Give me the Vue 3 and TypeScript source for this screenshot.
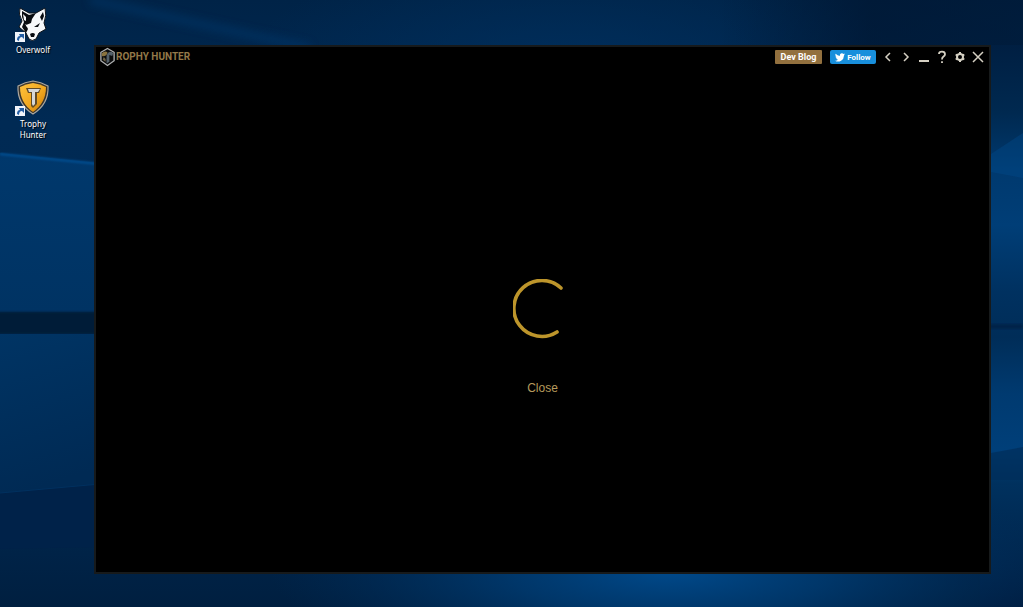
<script setup lang="ts">
interface Shortcut {
  id: 'overwolf' | 'trophy'
  label: string
}

const shortcuts: Shortcut[] = [
  { id: 'overwolf', label: 'Overwolf' },
  { id: 'trophy', label: 'Trophy Hunter' },
]
</script>

<template>
  <div class="desktop">
    <svg class="wallpaper" viewBox="0 0 1023 607" preserveAspectRatio="none" aria-hidden="true">
      <defs>
        <linearGradient id="base" x1="0" y1="0" x2="0" y2="1">
          <stop offset="0" stop-color="#002347" />
          <stop offset="0.2" stop-color="#002a54" />
          <stop offset="0.8" stop-color="#002850" />
          <stop offset="1" stop-color="#001f40" />
        </linearGradient>
        <radialGradient id="top-glow">
          <stop offset="0" stop-color="#00305f" stop-opacity="0.8" />
          <stop offset="1" stop-color="#00305f" stop-opacity="0" />
        </radialGradient>
        <radialGradient id="bottom-glow">
          <stop offset="0" stop-color="#004a8c" />
          <stop offset="0.4" stop-color="#003c73" stop-opacity="0.8" />
          <stop offset="1" stop-color="#00305f" stop-opacity="0" />
        </radialGradient>
        <linearGradient id="corner" x1="0" y1="0" x2="1" y2="0">
          <stop offset="0" stop-color="#00142e" stop-opacity="0" />
          <stop offset="0.5" stop-color="#00142e" stop-opacity="0.6" />
          <stop offset="1" stop-color="#00142e" stop-opacity="0.5" />
        </linearGradient>
        <linearGradient id="pane-upper" x1="0" y1="0" x2="0" y2="1">
          <stop offset="0" stop-color="#00386c" />
          <stop offset="1" stop-color="#003363" />
        </linearGradient>
        <linearGradient id="pane-lower" x1="0" y1="0" x2="0.2" y2="1">
          <stop offset="0" stop-color="#003464" />
          <stop offset="1" stop-color="#002a54" />
        </linearGradient>
        <linearGradient id="right-side" x1="0" y1="0" x2="0" y2="1">
          <stop offset="0" stop-color="#001f42" />
          <stop offset="0.12" stop-color="#002950" />
          <stop offset="0.22" stop-color="#00396e" />
          <stop offset="0.32" stop-color="#003e77" />
          <stop offset="0.44" stop-color="#003160" />
          <stop offset="0.52" stop-color="#002d58" />
          <stop offset="0.62" stop-color="#003a70" />
          <stop offset="0.72" stop-color="#003f79" />
          <stop offset="0.78" stop-color="#00315e" />
          <stop offset="1" stop-color="#001e42" />
        </linearGradient>
        <filter id="soft" x="-20%" y="-20%" width="140%" height="140%">
          <feGaussianBlur stdDeviation="1" />
        </filter>
        <filter id="haze" x="-20%" y="-50%" width="140%" height="200%">
          <feGaussianBlur stdDeviation="4" />
        </filter>
      </defs>
      <rect width="1023" height="607" fill="url(#base)" />
      <ellipse cx="570" cy="70" rx="330" ry="120" fill="url(#top-glow)" />
      <rect x="720" width="303" height="50" fill="url(#corner)" />
      <path d="M90 0 L310 48" stroke="#003a70" stroke-width="8" opacity="0.5" filter="url(#haze)" />
      <path d="M0 153 L100 163 V312 H0Z" fill="url(#pane-upper)" />
      <path d="M0 154 L100 164" stroke="#005195" stroke-width="2" filter="url(#soft)" />
      <path d="M-4 312 H104 V334 H-4Z" fill="#001a39" filter="url(#soft)" />
      <path d="M0 334 H100 V484 L0 493Z" fill="url(#pane-lower)" />
      <path d="M0 493 L100 484 V547 L0 549Z" fill="#002249" />
      <path d="M0 493 L100 484" stroke="#00315f" />
      <rect x="980" y="45" width="43" height="562" fill="url(#right-side)" />
      <path d="M991 154 L1023 133 V178 L991 172Z" fill="#004a8b" opacity="0.4" />
      <path d="M980 324 H1023 V329 H980Z" fill="#00234a" filter="url(#soft)" />
      <path d="M991 453 L1023 447 V480 H991Z" fill="#002d5a" opacity="0.7" />
      <ellipse cx="670" cy="570" rx="400" ry="110" fill="url(#bottom-glow)" />
    </svg>

    <nav class="shortcuts" aria-label="Desktop shortcuts">
      <button v-for="item in shortcuts" :key="item.id" class="shortcut" type="button">
        <svg v-if="item.id === 'overwolf'" class="shortcut-icon" viewBox="0 0 36 36" aria-hidden="true">
          <path d="M5 2 L14 7 L21 7 L30 2 Q32 9 29 17 L31 23 L24 27 L21 33 Q17 36 14 33 L11 27 L4 21 L7 15 Q3 8 5 2Z" fill="#f7f8fa" stroke="#0b1118" />
          <path d="M7 5 L14 9 L21 7 L17 13 L16 17 L11 19 L13 23 L11 27 L7 21 L9 16 L7 11Z" fill="#080b10" />
          <path d="M8 8 L11 11 L11 15 L9 14Z" fill="#f7f8fa" />
          <path d="M28 6 L29 10 L27 15 L25 11Z" fill="#080b10" />
          <path d="M19 21 L25 17 L23 21Z M15 28 Q18 26 20 28 L19 31 L16 31Z" fill="#080b10" />
          <path d="M10 18 L15 21 L12 21Z" fill="#f7f8fa" />
          <rect x="0" y="26" width="10" height="10" fill="#f0f4fa" />
          <path d="M2 34 Q2 30 5 30 L4 28 H9 V33 L7 31 Q4 31 4 35Z" fill="#225da4" />
        </svg>
        <svg v-else class="shortcut-icon" viewBox="0 0 36 36" aria-hidden="true">
          <defs>
            <linearGradient id="gold" x1="0" y1="0" x2="1" y2="1">
              <stop offset="0" stop-color="#ffc33e" />
              <stop offset="0.55" stop-color="#f1a71f" />
              <stop offset="1" stop-color="#c87908" />
            </linearGradient>
          </defs>
          <path d="M18 1 Q26 2 33 6 Q34 24 18 34 Q2 24 3 6 Q10 2 18 1Z" fill="#3b3429" stroke="#aaa69e" stroke-width="1.2" />
          <path d="M18 3 Q25 4 31 7 Q31 23 18 32 Q5 23 5 7 Q11 4 18 3Z" fill="url(#gold)" />
          <path d="M11 8 H26 L24 13 L22 13 V24 L18 28 L16 26 V13 L13 13Z" fill="#604b29" />
          <path d="M13 9 H25 L23 12 L20 12 V24 L18 26 L17 24 V12 L14 12Z" fill="#d6d7d8" />
          <rect x="0" y="26" width="10" height="10" fill="#f0f4fa" />
          <path d="M2 34 Q2 30 5 30 L4 28 H9 V33 L7 31 Q4 31 4 35Z" fill="#225da4" />
        </svg>
        <span class="shortcut-label">{{ item.label }}</span>
      </button>
    </nav>

    <section class="window" aria-label="Trophy Hunter">
      <header class="titlebar">
        <div class="brand">
          <svg class="brand-mark" viewBox="0 0 18 20" aria-hidden="true">
            <path d="M9 1 L16 5 V14 L9 19 L2 14 V5Z" fill="#0b0c0d" stroke="#aeb0b1" stroke-width="1.4" />
            <path d="M3 6 Q6 3 9 5 L8 8 Q5 10 3 9Z" fill="#8a733f" />
            <path d="M9 6 Q13 3 15 6 L14 9 L11 8 L11 15 L8 17 V9Z" fill="#53606a" />
            <path d="M5 10 L7 12 V15 L4 13Z" fill="#6f6345" />
          </svg>
          <span>ROPHY HUNTER</span>
        </div>
        <div class="actions">
          <button class="badge blog" type="button">Dev Blog</button>
          <button class="badge follow" type="button">
            <svg class="bird" viewBox="0 0 24 20" aria-hidden="true">
              <path d="M24 2.4a10 10 0 0 1-2.8.8A5 5 0 0 0 23.300.5a10 10 0 0 1-3.100 1.200 4.900 4.900 0 0 0-8.400 4.500A14 14 0 0 1 1.700 1a4.900 4.900 0 0 0 1.500 6.600A5 5 0 0 1 1 7a5 5 0 0 0 3.900 4.900 5 5 0 0 1-2.200.1 4.900 4.900 0 0 0 4.600 3.400A10 10 0 0 1 0 17.500 14 14 0 0 0 21.500 4.900 10 10 0 0 0 24 2.400Z" fill="#fff" />
            </svg>
            <span>Follow</span>
          </button>
          <div class="controls">
            <button class="control" type="button" aria-label="Back">
              <svg viewBox="0 0 14 14"><path d="M9 3 L5 7 L9 11" /></svg>
            </button>
            <button class="control" type="button" aria-label="Forward">
              <svg viewBox="0 0 14 14"><path d="M5 3 L9 7 L5 11" /></svg>
            </button>
            <button class="control" type="button" aria-label="Minimize">
              <svg viewBox="0 0 14 14"><path d="M2 11 H12" stroke-width="2" /></svg>
            </button>
            <button class="control" type="button" aria-label="Help">
              <svg viewBox="0 0 14 14"><path d="M4 4 Q4 1.700 7 1.700 Q10 1.700 10 4.200 Q10 5.500 8.500 6.500 Q7 7.500 7 9.500 M7 11.200 V13" stroke-width="1.800" /></svg>
            </button>
            <button class="control" type="button" aria-label="Settings">
              <svg viewBox="0 0 14 14">
                <circle cx="7" cy="7" r="3" stroke-width="2" />
                <path d="M7 2 V4 M7 10 V12 M2.700 4.500 L4.400 5.500 M9.600 8.500 L11.300 9.500 M2.700 9.500 L4.400 8.500 M9.600 5.500 L11.300 4.500" stroke-width="2" />
              </svg>
            </button>
            <button class="control" type="button" aria-label="Close window">
              <svg viewBox="0 0 14 14"><path d="M2 2 L12 12 M12 2 L2 12" /></svg>
            </button>
          </div>
        </div>
      </header>

      <main class="loading">
        <svg class="spinner" viewBox="0 0 60 60" role="img" aria-label="Loading">
          <path d="M48 9 A28 28 0 1 0 44 53" fill="none" stroke="#bd952b" stroke-width="3.600" stroke-linecap="round" />
        </svg>
        <button class="close" type="button">Close</button>
      </main>
    </section>
  </div>
</template>

<style>
body {
  margin: 0;
  background: #002850;
}
</style>

<style scoped>
.desktop {
  position: relative;
  display: grid;
  grid-template-columns: 94px minmax(0, 1fr);
  min-height: 100vh;
  box-sizing: border-box;
  padding-right: 32px;
  font-family: "Liberation Sans", Arial, sans-serif;
}

.wallpaper {
  position: absolute;
  inset: 0;
  width: 100%;
  height: 100%;
}

button {
  border: 0;
  padding: 0;
  background: none;
  color: inherit;
  font: inherit;
  cursor: pointer;
}

.shortcuts {
  position: relative;
  display: flex;
  flex-direction: column;
  gap: 25px;
  padding: 6px 0 0 8px;
}

.shortcut {
  display: flex;
  flex-direction: column;
  align-items: center;
  gap: 2px;
  width: 50px;
  color: #fff;
  font-family: "Noto Sans", "Open Sans", sans-serif;
  font-size: 8px;
  line-height: 11px;
  text-shadow: 1px 1px 1px #000;
}

.shortcut-icon {
  width: 36px;
  height: 36px;
}

.shortcut-label {
  max-width: 40px;
}

.window {
  position: relative;
  display: flex;
  flex-direction: column;
  margin: 45px 0 33px;
  border: 2px solid #171a1b;
  background: #000;
}

.titlebar {
  display: flex;
  align-items: center;
  justify-content: space-between;
  height: 20px;
  padding: 0 4px 0 3px;
}

.brand {
  display: flex;
  align-items: center;
  color: #927849;
  font-family: Roboto, "Open Sans", sans-serif;
  font-size: 10px;
  font-weight: 700;
  line-height: 20px;
}

.brand-mark {
  width: 17px;
  height: 20px;
}

.actions {
  display: flex;
  align-items: center;
  gap: 8px;
}

.badge {
  display: flex;
  align-items: center;
  justify-content: center;
  gap: 2px;
  height: 14px;
  color: #fff;
  font-family: Roboto, "Liberation Sans", sans-serif;
  font-size: 9px;
  font-weight: 700;
}

.blog {
  width: 47px;
  border-radius: 1px;
  background: #92703e;
}

.follow {
  width: 46px;
  border-radius: 2px;
  background: #188fdc;
  font-size: 8px;
}

.bird {
  width: 10px;
  height: 9px;
}

.controls {
  display: flex;
  gap: 4px;
  margin-left: -3px;
}

.control {
  display: grid;
  width: 14px;
  height: 14px;
}

.control svg {
  width: 14px;
  height: 14px;
  fill: none;
  stroke: #d5d0c3;
  stroke-width: 1.5;
}

.loading {
  display: grid;
  flex: 1;
  grid-template-rows: 1fr auto 1fr;
  justify-items: center;
  padding-bottom: 22px;
}

.spinner {
  grid-row: 2;
  width: 60px;
  height: 60px;
}

.close {
  grid-row: 3;
  align-self: start;
  margin-top: 40px;
  color: #b69a5c;
  font-size: 12px;
  line-height: 18px;
}
</style>
